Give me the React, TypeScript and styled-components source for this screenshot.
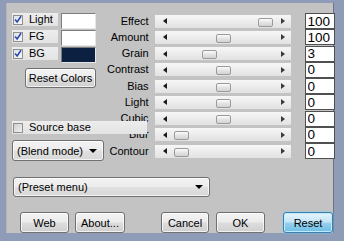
import React from "react";
import styled, { createGlobalStyle, css } from "styled-components";

const GlobalStyle = createGlobalStyle`
  html, body { margin: 0; padding: 0; background: #8e9cb8; }
  body { font-family: "Liberation Sans", Arial, sans-serif; font-size: 11px; color: #000; }
  * { box-sizing: border-box; }
`;

const Frame = styled.div`
  width: 344px;
  height: 241px;
  padding: 3px 10px 8px 6px;
  background: #8e9cb8;
`;

const Panel = styled.div`
  width: 328px;
  height: 230px;
  background: #c3c3c3;
  border-right: 1px solid #6f7483;
  border-left: 1px solid #b4b6bb;
  padding: 10px 1px 0 5px;
  display: flex;
  flex-direction: column;
`;

const Top = styled.div`
  display: flex;
  align-items: flex-start;
  height: 149px;
`;

const LeftCol = styled.div`
  width: 95px;
  flex: none;
  display: flex;
  flex-direction: column;
`;

const ColorRow = styled.div`
  display: flex;
  align-items: flex-start;
  height: 17px;
`;

const CheckLabel = styled.label<{ $wide?: boolean }>`
  display: flex;
  align-items: center;
  height: 13px;
  width: ${(p) => (p.$wide ? "135px" : "46px")};
  background: linear-gradient(#ededed, #e3e3e3);
  padding-left: 1px;
  gap: 6px;
  line-height: 13px;
  font-size: 11px;
`;

const Box = styled.span<{ $checked?: boolean }>`
  width: 10px;
  height: 10px;
  flex: none;
  border: 1px solid #8e8f8f;
  background: ${(p) =>
    p.$checked
      ? "linear-gradient(135deg, #dfe3ea, #f6f7f9)"
      : "linear-gradient(135deg, #cfcfcf, #f1f1f1)"};
  display: flex;
  align-items: center;
  justify-content: center;
`;

const Swatch = styled.div<{ $color: string }>`
  width: 35px;
  height: 16px;
  margin-left: 3px;
  background: ${(p) => p.$color};
  border-top: 1px solid #7c7c7c;
  border-left: 1px solid #7c7c7c;
  border-right: 1px solid #e6e6e6;
  border-bottom: 1px solid #e6e6e6;
`;

const buttonLook = css`
  font-family: "Liberation Sans", Arial, sans-serif;
  font-size: 11px;
  color: #000;
  border: 1px solid #707070;
  border-radius: 3px;
  background: linear-gradient(#f4f4f4 0%, #ebebeb 48%, #dddddd 52%, #cfcfcf 100%);
  box-shadow: inset 0 0 0 1px rgba(255, 255, 255, 0.7);
  padding: 0;
`;

const PushButton = styled.button<{ $default?: boolean; $w: number; $gap?: number }>`
  ${buttonLook};
  width: ${(p) => p.$w}px;
  height: 21px;
  margin-left: ${(p) => p.$gap ?? 0}px;
  flex: none;
  ${(p) =>
    p.$default &&
    css`
      border-color: #3c7fb1;
      background: linear-gradient(#e5f4fc 0%, #c4e5f6 48%, #98d1ef 52%, #6dbde6 100%);
      box-shadow: inset 0 0 0 1px #bfeafd, 0 0 2px #6ed1ff;
    `}
`;

const ResetColors = styled.button`
  ${buttonLook};
  width: 71px;
  height: 20px;
  margin: 4px 0 0 13px;
`;

const SourceRow = styled.div`
  position: relative;
  z-index: 1;
  margin-top: 33px;
`;

const Select = styled.div<{ $w: number }>`
  ${buttonLook};
  width: ${(p) => p.$w}px;
  height: 21px;
  display: flex;
  align-items: center;
  justify-content: space-between;
  padding: 0 6px 0 4px;
  background: linear-gradient(#f3f3f3 0%, #ececec 48%, #e0e0e0 52%, #d8d8d8 100%);
`;

const BlendSelect = styled(Select)`
  margin-top: 6px;
`;

const DownTri = styled.span`
  width: 0;
  height: 0;
  border-left: 4px solid transparent;
  border-right: 4px solid transparent;
  border-top: 4px solid #000;
`;

const Sliders = styled.div`
  flex: 1;
  display: grid;
  grid-template-columns: 1fr 136px 38px;
  grid-auto-rows: 16.25px;
  column-gap: 6px;
  align-items: center;
`;

const SliderLabel = styled.span`
  text-align: right;
  font-size: 11px;
  white-space: nowrap;
  line-height: 13px;
`;

const Track = styled.div`
  position: relative;
  height: 13px;
  background: linear-gradient(#f7f7f7, #eaeaea 60%, #e2e2e2);
  display: flex;
  align-items: center;
  justify-content: space-between;
  padding: 0 6px 0 8px;
`;

const ArrowL = styled.span`
  width: 0;
  height: 0;
  border-top: 3.5px solid transparent;
  border-bottom: 3.5px solid transparent;
  border-right: 4px solid #1a1a1a;
`;

const ArrowR = styled.span`
  width: 0;
  height: 0;
  border-top: 3.5px solid transparent;
  border-bottom: 3.5px solid transparent;
  border-left: 4px solid #3a3a3a;
`;

const Thumb = styled.span`
  position: absolute;
  top: 3px;
  width: 15px;
  height: 9px;
  border: 1px solid #9a9a9a;
  border-radius: 2px;
  background: linear-gradient(#fbfbfb, #e4e4e4 50%, #d3d3d3);
`;

const NumBox = styled.input`
  justify-self: end;
  width: 30px;
  height: 16px;
  margin: 0;
  padding: 0 0 0 2px;
  border: 1px solid #505050;
  background: #fff;
  font-family: "Liberation Sans", Arial, sans-serif;
  font-size: 13.5px;
  line-height: 14px;
  color: #000;
  outline: none;
`;

const PresetSelect = styled(Select)`
  margin: 16px 0 0 1px;
`;

const ButtonRow = styled.div`
  display: flex;
  margin-top: 15px;
  padding-left: 8px;
`;

const Check = () => (
  <svg width="9" height="9" viewBox="0 0 9 9">
    <path d="M1.2 4.6 L3.5 7.3 L7.9 0.9" fill="none" stroke="#2846a8" strokeWidth="1.7" />
  </svg>
);

const colors = [
  { name: "Light", color: "#ffffff" },
  { name: "FG", color: "#ffffff" },
  { name: "BG", color: "#0c2041" },
];

const sliders = [
  { name: "Effect", value: "100", pos: 103 },
  { name: "Amount", value: "100", pos: 61 },
  { name: "Grain", value: "3", pos: 47 },
  { name: "Contrast", value: "0", pos: 61 },
  { name: "Bias", value: "0", pos: 61 },
  { name: "Light", value: "0", pos: 61 },
  { name: "Cubic", value: "0", pos: 61 },
  { name: "Blur", value: "0", pos: 19 },
  { name: "Contour", value: "0", pos: 19 },
];

export default function App() {
  return (
    <Frame>
      <GlobalStyle />
      <Panel>
        <Top>
          <LeftCol>
            {colors.map((c) => (
              <ColorRow key={c.name}>
                <CheckLabel>
                  <Box $checked>
                    <Check />
                  </Box>
                  {c.name}
                </CheckLabel>
                <Swatch $color={c.color} />
              </ColorRow>
            ))}
            <ResetColors>Reset Colors</ResetColors>
            <SourceRow>
              <CheckLabel $wide>
                <Box />
                Source base
              </CheckLabel>
            </SourceRow>
            <BlendSelect $w={92}>
              <span>(Blend mode)</span>
              <DownTri />
            </BlendSelect>
          </LeftCol>
          <Sliders>
            {sliders.map((s) => (
              <React.Fragment key={s.name}>
                <SliderLabel>{s.name}</SliderLabel>
                <Track>
                  <ArrowL />
                  <Thumb style={{ left: `${s.pos}px` }} />
                  <ArrowR />
                </Track>
                <NumBox readOnly value={s.value} />
              </React.Fragment>
            ))}
          </Sliders>
        </Top>
        <PresetSelect $w={197}>
          <span>(Preset menu)</span>
          <DownTri />
        </PresetSelect>
        <ButtonRow>
          <PushButton $w={49}>Web</PushButton>
          <PushButton $w={50} $gap={6}>About...</PushButton>
          <PushButton $w={48} $gap={36}>Cancel</PushButton>
          <PushButton $w={49} $gap={7}>OK</PushButton>
          <PushButton $w={50} $gap={18} $default>Reset</PushButton>
        </ButtonRow>
      </Panel>
    </Frame>
  );
}
